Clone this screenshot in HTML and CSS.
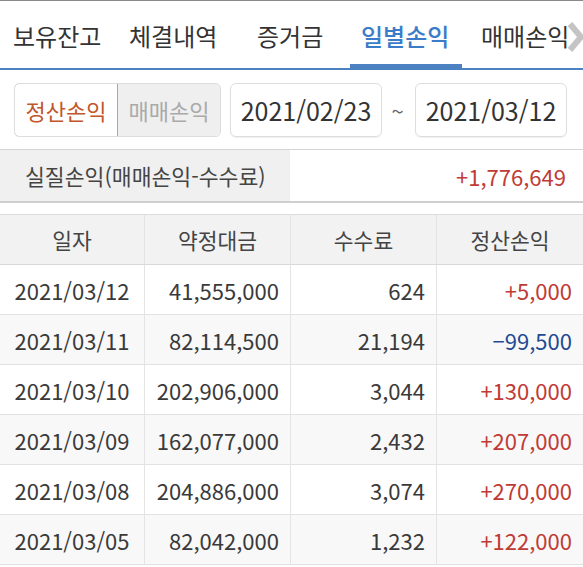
FILE: index.html
```html
<!DOCTYPE html>
<html lang="ko">
<head>
<meta charset="utf-8">
<link rel="stylesheet" href="styles.css">
</head>
<body>
<div class="app">
  <nav class="tabs">
    <span class="tab t1">보유잔고</span>
    <span class="tab t2">체결내역</span>
    <span class="tab t3">증거금</span>
    <span class="tab t4 active">일별손익</span>
    <span class="tab t5">매매손익</span>
    <svg class="chev" width="20" height="34" viewBox="0 0 20 34"><path d="M4 4 L15 17 L4 30" fill="none" stroke="#c4c4c4" stroke-width="6" stroke-linejoin="miter"/></svg>
  </nav>
  <div class="filters">
    <div class="seg">
      <span class="seg-btn on">정산손익</span>
      <span class="seg-btn off">매매손익</span>
    </div>
    <div class="date">2021/02/23</div>
    <span class="tilde">~</span>
    <div class="date">2021/03/12</div>
  </div>
  <div class="summary">
    <div class="sum-label">실질손익(매매손익-수수료)</div>
    <div class="sum-value plus">+1,776,649</div>
  </div>
  <div class="table">
    <div class="row head">
      <div class="c">일자</div><div class="c">약정대금</div><div class="c">수수료</div><div class="c">정산손익</div>
    </div>
    <div class="row">
      <div class="c d">2021/03/12</div><div class="c n">41,555,000</div><div class="c n">624</div><div class="c n plus">+5,000</div>
    </div>
    <div class="row alt">
      <div class="c d">2021/03/11</div><div class="c n">82,114,500</div><div class="c n">21,194</div><div class="c n minus">−99,500</div>
    </div>
    <div class="row">
      <div class="c d">2021/03/10</div><div class="c n">202,906,000</div><div class="c n">3,044</div><div class="c n plus">+130,000</div>
    </div>
    <div class="row alt">
      <div class="c d">2021/03/09</div><div class="c n">162,077,000</div><div class="c n">2,432</div><div class="c n plus">+207,000</div>
    </div>
    <div class="row">
      <div class="c d">2021/03/08</div><div class="c n">204,886,000</div><div class="c n">3,074</div><div class="c n plus">+270,000</div>
    </div>
    <div class="row alt">
      <div class="c d">2021/03/05</div><div class="c n">82,042,000</div><div class="c n">1,232</div><div class="c n plus">+122,000</div>
    </div>
  </div>
</div>
</body>
</html>
```
FILE: styles.css
```css
* { box-sizing: border-box; }
html, body { margin: 0; padding: 0; background: #fff; }
body {
  font-family: "Noto Sans CJK KR", "Noto Sans", sans-serif;
  color: #333;
  width: 583px;
  height: 567px;
  overflow: hidden;
}
.app { border-top: 1px solid #8a8a8a; }

.tabs {
  position: relative;
  height: 69px;
  border-bottom: 2px solid #4d82c2;
  font-size: 24px;
  color: #333;
  white-space: nowrap;
}
.tab { position: absolute; top: 16px; line-height: 38px; }
.t1 { left: 13px; }
.t2 { left: 129px; }
.t3 { left: 257px; }
.t4 { left: 361px; }
.t5 { left: 481px; }
.tab.active { color: #3b7cc9; font-weight: 500; }
.tab.active::after {
  content: "";
  position: absolute;
  left: -11px;
  right: -13px;
  top: 47px;
  height: 4px;
  background: #4d82c2;
}
.chev { position: absolute; left: 566px; top: 19px; }

.filters {
  display: flex;
  align-items: flex-start;
  padding: 13px 0 0 14px;
  height: 79px;
}
.seg {
  display: flex;
  width: 207px;
  height: 54px;
  border-radius: 5px;
  overflow: hidden;
  border: 1px solid #ddd;
}
.seg-btn {
  flex: 1;
  display: flex;
  align-items: center;
  justify-content: center;
  font-size: 22px;
}
.seg-btn.on {
  color: #c2562a;
  border: 1px solid #d89a7c;
  border-radius: 5px 0 0 5px;
  margin: -1px 0 -1px -1px;
  background: #fff;
}
.seg-btn.off { background: #efefef; color: #aaa; }
.date {
  margin-left: 9px;
  width: 152px;
  height: 54px;
  border: 1px solid #ddd;
  border-radius: 6px;
  display: flex;
  align-items: center;
  justify-content: center;
  font-size: 25px;
  color: #333;
  box-shadow: 0 1px 1px rgba(0,0,0,0.06);
}
.tilde {
  width: 25px;
  margin-left: 3px;
  text-align: center;
  line-height: 54px;
  font-size: 22px;
  color: #666;
}
.tilde + .date { margin-left: 5px; }

.summary {
  display: flex;
  height: 54px;
  border-top: 1px solid #d4d4d4;
  border-bottom: 2px solid #cfcfcf;
}
.sum-label {
  width: 290px;
  background: #f0f0f0;
  display: flex;
  align-items: center;
  padding-left: 25px;
  font-size: 21.6px;
  color: #444;
}
.sum-value {
  flex: 1;
  display: flex;
  align-items: center;
  justify-content: flex-end;
  padding-right: 17px;
  font-size: 22px;
}
.plus { color: #c03b36; }
.minus { color: #1f4a94; }

.table { margin-top: 11px; border-top: 1px solid #dcdcdc; }
.row {
  display: grid;
  grid-template-columns: 145px 146px 146px 146px;
  height: 50px;
  border-bottom: 1px solid #e2e2e2;
}
.row.head { background: #f2f2f2; border-bottom: 1px solid #d8d8d8; }
.row.alt { background: #f8f8f8; }
.c {
  display: flex;
  align-items: center;
  justify-content: center;
  font-size: 22px;
  color: #3a3a3a;
  border-right: 1px solid #e4e4e4;
  white-space: nowrap;
}
.c:last-child { border-right: none; }
.head .c { color: #444; font-size: 21.5px; }
.c.n { justify-content: flex-end; padding-right: 11px; }
.c.plus { color: #c03b36; }
.c.minus { color: #1f4a94; }
```
